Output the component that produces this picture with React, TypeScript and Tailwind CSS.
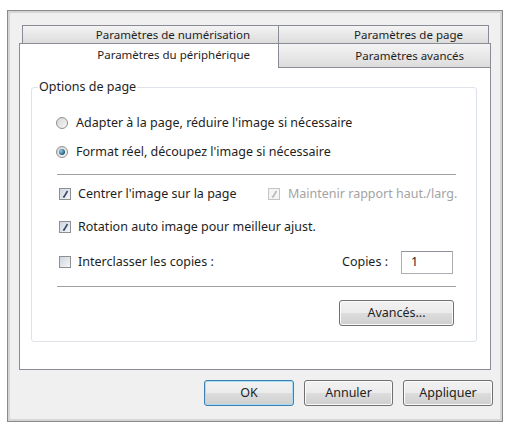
import React from 'react';

const font = { fontFamily: '"Noto Sans", "Segoe UI", Arial, sans-serif' };

const Radio = ({ checked }: { checked?: boolean }) => (
    <span className="w-[12px] h-[12px] rounded-full border border-[#8e8f8f] bg-[linear-gradient(135deg,#d6d6d6,#f7f7f7)] flex items-center justify-center shrink-0">
        {checked && <span className="w-[6px] h-[6px] rounded-full bg-[radial-gradient(circle_at_35%_35%,#8fd0ee,#1d5a7a_70%)]" />}
    </span>
);

const Check = ({ checked, disabled }: { checked?: boolean; disabled?: boolean }) => (
    <span
        className={`w-[12px] h-[12px] border flex items-center justify-center shrink-0 ${disabled ? 'border-[#c4c4c4] bg-[#f4f4f4]' : 'border-[#8e8f8f] bg-[linear-gradient(135deg,#cfd6e0,#f4f6f8)]'}`}
    >
        {checked && (
            <svg width="8" height="8" viewBox="0 0 8 8">
                <path d="M2 6.5 L3 7 L6.5 1" fill="none" stroke={disabled ? '#b9b9b9' : '#3a4a6a'} strokeWidth="1.6" />
            </svg>
        )}
    </span>
);

const Button = ({ label, primary, className = '' }: { label: string; primary?: boolean; className?: string }) => (
    <button
        className={`h-[26px] rounded-[3px] border text-[12.5px] text-[#1e1e1e] bg-[linear-gradient(to_bottom,#f2f2f2_0%,#ebebeb_50%,#dddddd_50%,#cfcfcf_100%)] ${primary ? 'border-[#3c7fb1] shadow-[inset_0_0_0_1px_#a6dcf6]' : 'border-[#707070] shadow-[inset_0_0_0_1px_#fbfbfb]'} ${className}`}
    >
        {label}
    </button>
);

const Separator = () => <div className="ml-[1px] border-t border-[#a0a0a0] shadow-[0_1px_0_#ffffff]" />;

export default function App() {
    return (
        <div className="w-[509px] h-[423px] bg-white pt-[10px] pl-[7px] overflow-hidden" style={font}>
            <div className="w-[496px] h-[412px] border border-[#8a8a8a] bg-[#f0f0f0] shadow-[inset_0_0_0_2px_#d6d6d6] pt-[14px] pl-[11px] pr-[11px] flex flex-col text-[12.5px] text-[#1e1e1e]">
                {/* Tabs */}
                <div className="flex ml-[3px] w-[467px] h-[18px] text-[11.5px]">
                    <div className="w-[257px] border-l border-t border-r border-[#898c95] bg-[linear-gradient(to_bottom,#f4f4f4,#dcdcdc)] flex items-center justify-end pr-[28px] leading-none">
                        Paramètres de numérisation
                    </div>
                    <div className="flex-1 border-t border-r border-[#898c95] bg-[linear-gradient(to_bottom,#f4f4f4,#dcdcdc)] flex items-center justify-end pr-[25px] leading-none">
                        Paramètres de page
                    </div>
                </div>
                <div className="flex h-[25px] -mb-px relative z-10 text-[11.5px]">
                    <div className="w-[260px] border-l border-t border-r border-[#898c95] bg-white flex items-center justify-end pr-[28px] pb-[2px] leading-none">
                        Paramètres du périphérique
                    </div>
                    <div className="flex-1 border-t border-r border-b border-[#898c95] bg-[linear-gradient(to_bottom,#f4f4f4,#dcdcdc)] flex items-center justify-end pr-[26px] leading-none">
                        Paramètres avancés
                    </div>
                </div>

                {/* Panel */}
                <div className="h-[303px] border border-[#898c95] bg-white pt-[11px] pl-[11px] pr-[13px]">
                    <fieldset className="min-w-0 border border-[#dde3e8] rounded-[3px] pl-[6px] pr-[6px] pb-[15px]">
                        <legend className="px-[1px] leading-[16px]">Options de page</legend>
                        <div className="min-w-0 pl-[18px] pr-[14px] pt-[18px] flex flex-col">
                            <div className="h-[20px] flex items-center gap-[8px]">
                                <Radio />
                                <span>Adapter à la page, réduire l'image si nécessaire</span>
                            </div>
                            <div className="h-[20px] mt-[9px] flex items-center gap-[8px]">
                                <Radio checked />
                                <span>Format réel, découpez l'image si nécessaire</span>
                            </div>
                            <div className="mt-[12px]">
                                <Separator />
                            </div>
                            <div className="h-[20px] mt-[9px] flex items-center whitespace-nowrap">
                                <div className="w-[212px] shrink-0 flex items-center gap-[7px] pl-[3px]">
                                    <Check checked />
                                    <span>Centrer l'image sur la page</span>
                                </div>
                                <div className="flex items-center gap-[8px] text-[#a3a3a3]">
                                    <Check checked disabled />
                                    <span>Maintenir rapport haut./larg.</span>
                                </div>
                            </div>
                            <div className="h-[20px] mt-[13px] flex items-center gap-[7px] pl-[3px]">
                                <Check checked />
                                <span>Rotation auto image pour meilleur ajust.</span>
                            </div>
                            <div className="h-[24px] mt-[13px] flex items-center pr-[3px]">
                                <div className="flex items-center gap-[7px] pl-[3px]">
                                    <Check />
                                    <span>Interclasser les copies :</span>
                                </div>
                                <span className="ml-auto">Copies :</span>
                                <div className="ml-[13px] w-[52px] h-[23px] border border-[#abadb3] border-t-[#8f9399] bg-white flex items-center pl-[9px]">
                                    1
                                </div>
                            </div>
                            <div className="mt-[12px]">
                                <Separator />
                            </div>
                            <div className="mt-[13px] flex justify-end pr-[2px]">
                                <Button label="Avancés..." className="w-[115px]" />
                            </div>
                        </div>
                    </fieldset>
                </div>

                {/* Dialog buttons */}
                <div className="mt-[10px] -mr-[2px] flex justify-end gap-[10px]">
                    <Button label="OK" primary className="w-[90px]" />
                    <Button label="Annuler" className="w-[89px]" />
                    <Button label="Appliquer" className="w-[90px]" />
                </div>
            </div>
        </div>
    );
}
